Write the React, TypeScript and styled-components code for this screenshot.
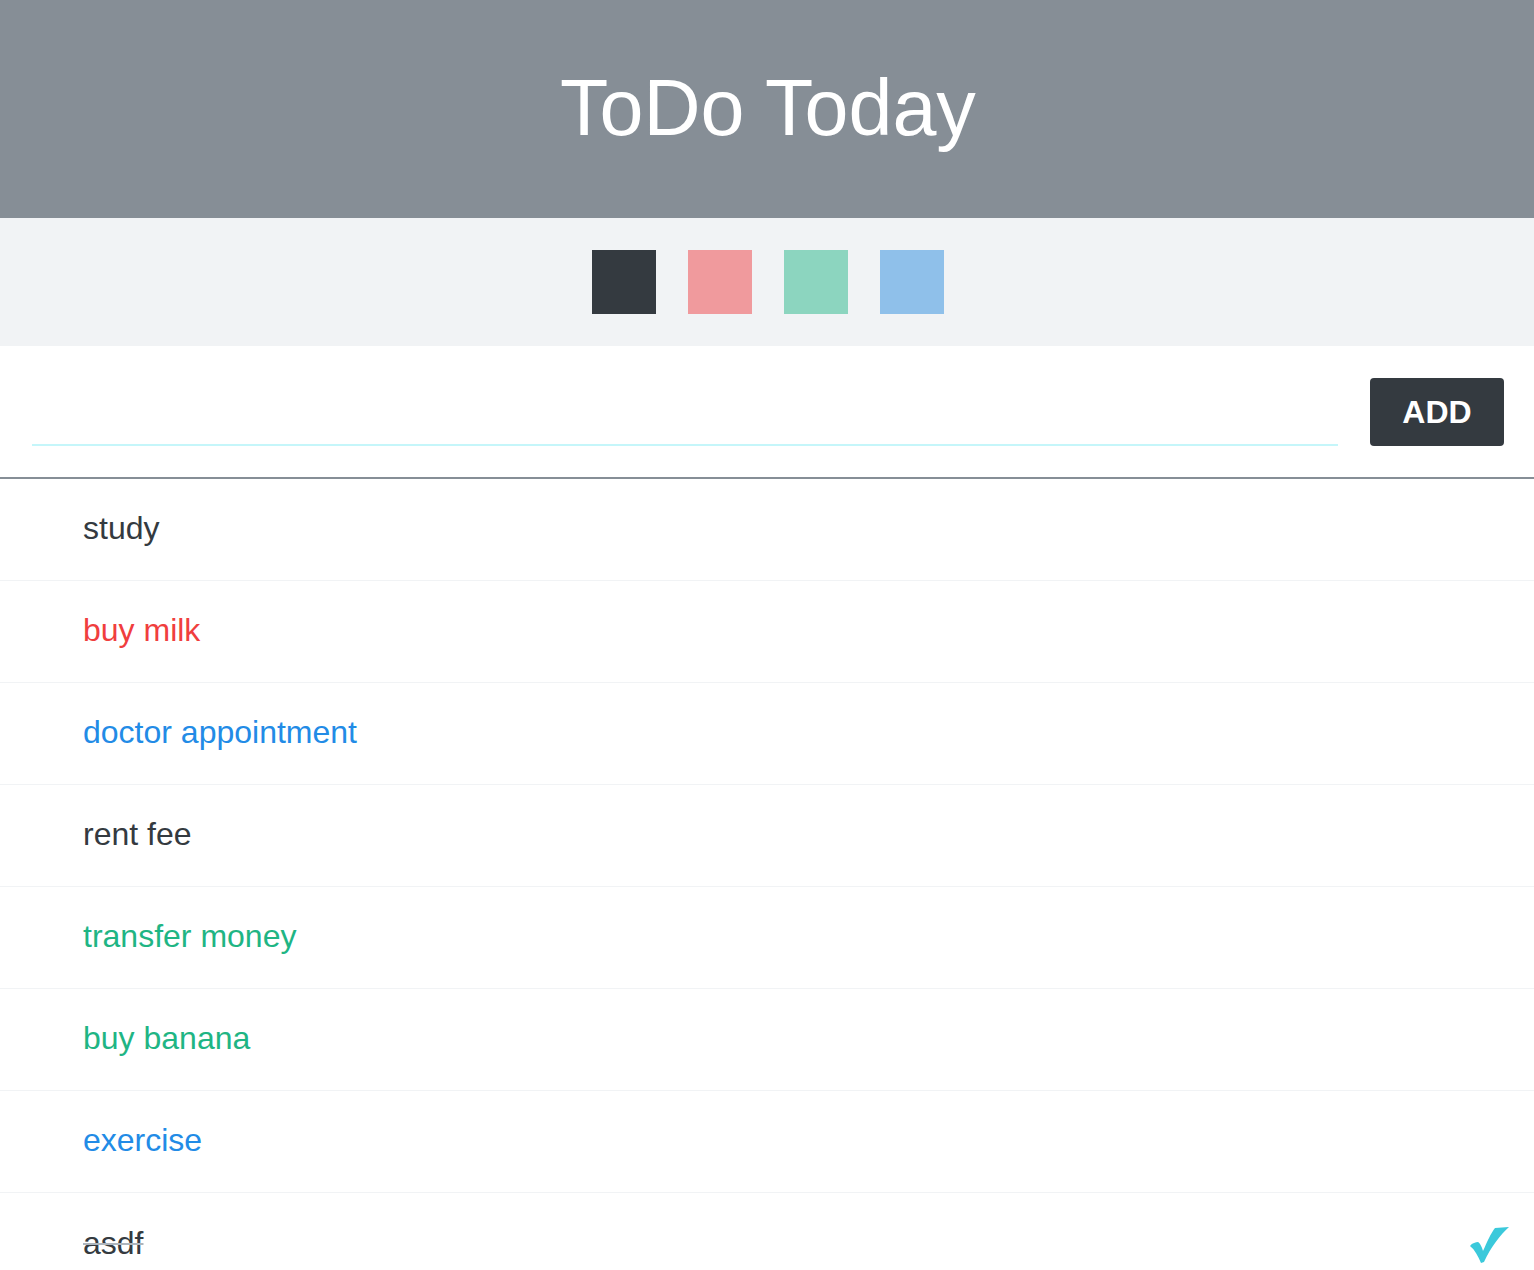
import React, { useState } from "react";
import styled, { createGlobalStyle } from "styled-components";

const GlobalStyle = createGlobalStyle`
  html, body {
    margin: 0;
    padding: 0;
    background: #ffffff;
    font-family: "Liberation Sans", Arial, Helvetica, sans-serif;
  }
  * { box-sizing: border-box; }
`;

const Page = styled.div`
  display: flex;
  flex-direction: column;
  width: 100%;
`;

const Header = styled.header`
  height: 218px;
  background: #868e96;
  display: flex;
  align-items: center;
  justify-content: center;
`;

const Title = styled.h1`
  margin: 0;
  padding-bottom: 3px;
  padding-left: 2px;
  color: #ffffff;
  font-family: "Liberation Sans", Arial, sans-serif;
  font-weight: 400;
  font-size: 79px;
  line-height: 1;
`;

const Palette = styled.div`
  background: #f1f3f5;
  padding: 32px 32px 32px 34px;
  display: flex;
  justify-content: center;
  gap: 32px;
`;

const Swatch = styled.button<{ $color: string }>`
  width: 64px;
  height: 64px;
  border: none;
  padding: 0;
  background: ${(p) => p.$color};
  cursor: pointer;
`;

const Form = styled.form`
  display: flex;
  align-items: flex-start;
  gap: 32px;
  padding: 32px 30px 31px 32px;
  border-bottom: 2px solid #868e96;
`;

const Input = styled.input`
  flex: 1;
  height: 68px;
  border: none;
  border-bottom: 2px solid #c5f6fa;
  outline: none;
  font-family: "Liberation Sans", Arial, sans-serif;
  font-size: 32px;
  color: #343a40;
  background: transparent;
`;

const AddButton = styled.button`
  width: 134px;
  height: 68px;
  border: none;
  border-radius: 4px;
  background: #343a40;
  color: #ffffff;
  font-family: "Liberation Sans", Arial, sans-serif;
  font-weight: 700;
  font-size: 32px;
  cursor: pointer;
`;

const List = styled.ul`
  list-style: none;
  margin: 0;
  padding: 0;
`;

const Row = styled.li`
  height: 102px;
  display: flex;
  align-items: center;
  justify-content: space-between;
  padding: 0 24px 0 83px;
  border-bottom: 1px solid #f1f3f5;
  &:last-child { border-bottom: none; }
`;

const ItemText = styled.span<{ $color: string; $done?: boolean }>`
  font-family: "Liberation Sans", Arial, sans-serif;
  font-size: 32px;
  color: ${(p) => p.$color};
  text-decoration: ${(p) => (p.$done ? "line-through" : "none")};
  text-decoration-color: #adb5bd;
  text-decoration-thickness: 2px;
  padding-bottom: 2px;
`;

const Check = styled.svg`
  width: 40px;
  height: 40px;
  margin-top: 0px;
`;

const swatches = ["#343a40", "#f09a9d", "#8cd5bf", "#8fc0ea"];

const items = [
  { text: "study", color: "#343a40" },
  { text: "buy milk", color: "#f03e3e" },
  { text: "doctor appointment", color: "#228be6" },
  { text: "rent fee", color: "#343a40" },
  { text: "transfer money", color: "#1fb584" },
  { text: "buy banana", color: "#1fb584" },
  { text: "exercise", color: "#228be6" },
  { text: "asdf", color: "#343a40", done: true },
];

export default function App() {
  const [value, setValue] = useState("");
  return (
    <Page>
      <GlobalStyle />
      <Header>
        <Title>ToDo Today</Title>
      </Header>
      <Palette>
        {swatches.map((c) => (
          <Swatch key={c} $color={c} aria-label={c} />
        ))}
      </Palette>
      <Form onSubmit={(e) => e.preventDefault()}>
        <Input value={value} onChange={(e) => setValue(e.target.value)} />
        <AddButton type="submit">ADD</AddButton>
      </Form>
      <List>
        {items.map((it) => (
          <Row key={it.text}>
            <ItemText $color={it.color} $done={it.done}>
              {it.text}
            </ItemText>
            {it.done && (
              <Check viewBox="0 0 40 40">
                <path
                  d="M0 22 C2 19 6 18 8 18 C10 19 12 23 13 27 C17 18 21 9 25 4 L39 3 C30 11 21 23 14 38 L11 39 C8 32 5 26 0 22 Z"
                  fill="#3bc9db"
                />
              </Check>
            )}
          </Row>
        ))}
      </List>
    </Page>
  );
}
